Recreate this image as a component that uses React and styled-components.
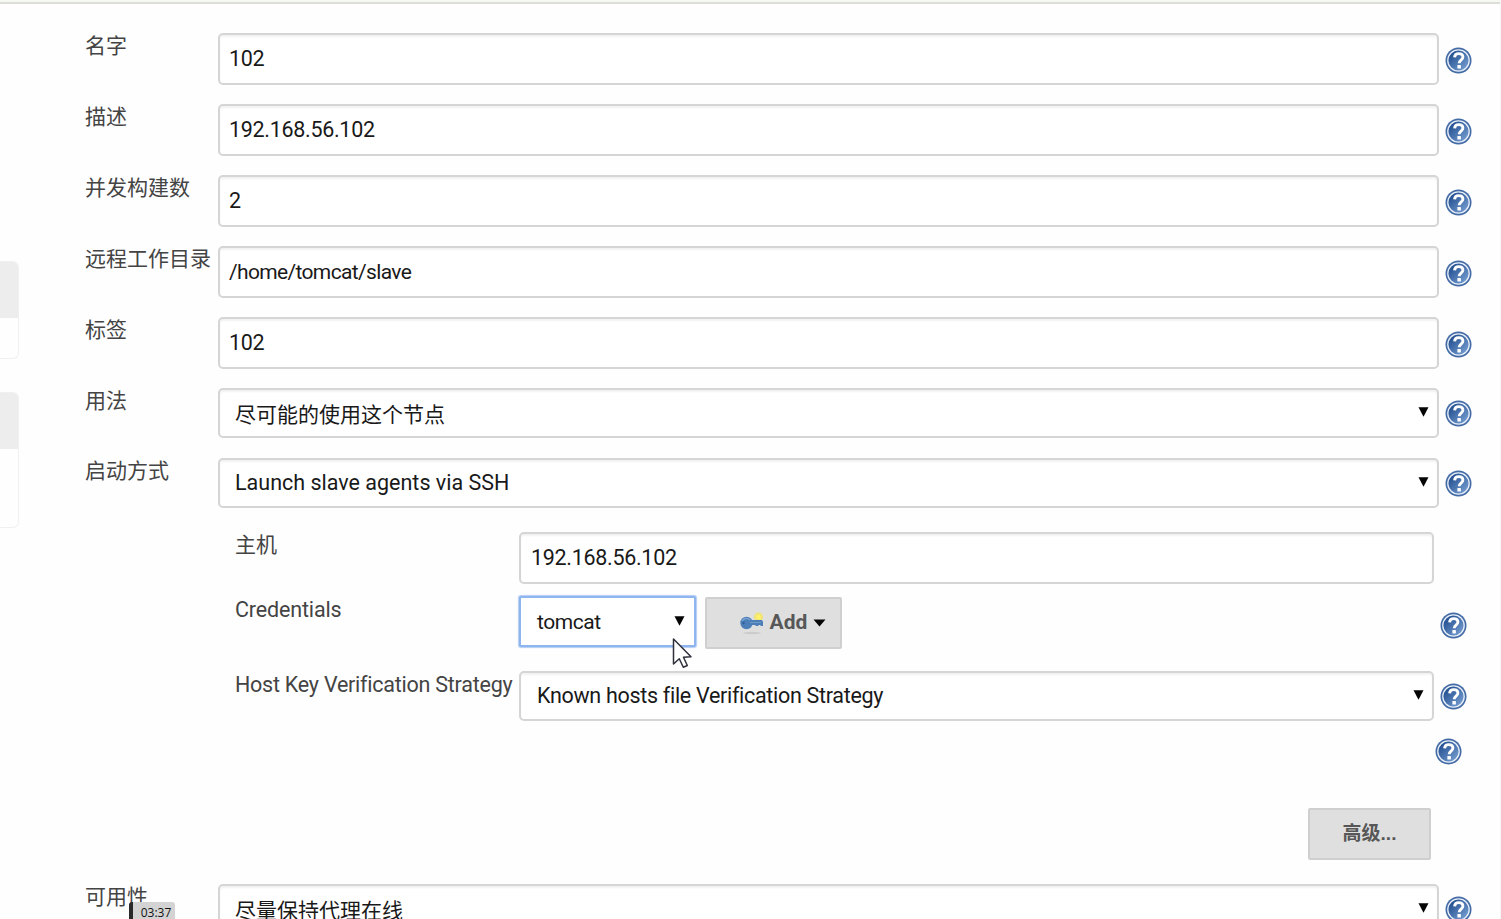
import React from "react";
import styled, { createGlobalStyle, css } from "styled-components";

const Global = createGlobalStyle`
  * { box-sizing: border-box; }
  body {
    margin: 0;
    background: #fefefe;
    font: 21px/26px "Liberation Sans", "Noto Sans CJK SC", sans-serif;
    color: #444;
    overflow: hidden;
  }
`;

const latinText = css`
  font-family: Roboto, "Liberation Sans", sans-serif;
  font-size: ${(p) => p.$size || 21.5}px;
  letter-spacing: ${(p) => p.$ls || 0}px;
`;

const Page = styled.div`
  position: relative;
  height: 919px;
  display: flex;
  flex-direction: column;
  overflow: hidden;
  border-right: 1px solid #f7f7f7;
`;
const TopBar = styled.header`
  height: 4px;
  flex: none;
  background: #f6f8f2;
  border-bottom: 2px solid #dcddd9;
`;
const Body = styled.div`
  display: flex;
  flex: 1;
  min-height: 0;
`;
const Sidebar = styled.aside`
  width: 85px;
  flex: none;
  padding-top: 257px;
  display: flex;
  flex-direction: column;
  gap: 33px;
`;
const Pane = styled.section`
  width: 19px;
  height: ${(p) => p.$h}px;
  border: 1px solid #f0f0f0;
  border-left: 0;
  border-radius: 0 6px 6px 0;
  overflow: hidden;
`;
const PaneHead = styled.div`
  height: 56px;
  background: #ededed;
`;
const Form = styled.main`
  flex: 1;
  padding-top: 29px;
`;
const Row = styled.div`
  display: flex;
  align-items: flex-start;
  height: ${(p) => p.$h || 71}px;
`;
const Label = styled.label`
  width: ${(p) => p.$w || 133}px;
  flex: none;
  white-space: nowrap;
  padding-top: ${(p) => p.$top || 0}px;
  ${(p) => p.$latin && latinText}
`;
const Field = styled.div`
  width: ${(p) => p.$w || 1221}px;
  height: ${(p) => p.$h || 52}px;
  flex: none;
  display: flex;
  align-items: center;
  justify-content: space-between;
  border: 2px solid ${(p) => (p.$focus ? "#8fb5ee" : "#d5d5d5")};
  border-radius: ${(p) => (p.$focus ? 2 : 5)}px;
  background: #fff;
  box-shadow: ${(p) => (p.$focus ? "0 0 1px 1px #b2cdf5" : "inset 0 2px 2px #f2f2f2")};
  padding: 0 ${(p) => (p.$select ? (p.$focus ? 9 : 8) : 10)}px 0 ${(p) => p.$pl || (p.$select ? 15 : 9)}px;
  color: #191919;
`;
const Value = styled.span`
  position: relative;
  top: ${(p) => p.$dy || 0}px;
  white-space: nowrap;
  ${(p) => p.$latin && latinText}
`;
const Caret = styled.svg`
  width: 11px;
  height: 10px;
  display: block;
  margin-bottom: 2px;
`;
const HelpIcon = styled.svg`
  width: 27px;
  height: 27px;
  flex: none;
  margin: ${(p) => p.$top}px 0 0 6px;
`;
const Nested = styled.section`
  padding-left: 150px;
  height: 352px;
`;
const Button = styled.button`
  display: flex;
  align-items: center;
  justify-content: center;
  width: ${(p) => p.$w}px;
  height: 52px;
  padding: 0;
  border: 2px solid #cfcfcf;
  border-radius: 2px;
  background: #dfdfdf;
  color: #575757;
  font: bold ${(p) => p.$size || 21}px/26px "Liberation Sans", "Noto Sans CJK SC", sans-serif;
`;
const AddButton = styled(Button)`
  margin: 1px 0 0 9px;
  padding: 0 0 2px 18px;
  font-family: Roboto, "Liberation Sans", sans-serif;
`;
const KeyIcon = styled.svg`
  width: 26px;
  height: 26px;
  margin-right: 5px;
`;
const MenuCaret = styled.svg`
  width: 13px;
  height: 8px;
  margin: 1px 0 0 6px;
`;
const CredentialHelp = styled.div`
  margin-left: 592px;
`;
const HelpLine = styled.div`
  display: flex;
  justify-content: flex-end;
  height: 70px;
  padding-right: 38px;
`;
const Actions = styled.div`
  display: flex;
  justify-content: flex-end;
  padding-right: 69px;
`;
const Pointer = styled.svg`
  position: absolute;
  left: 671px;
  top: 637px;
  width: 23px;
  height: 34px;
`;
const TimeBadge = styled.div`
  position: absolute;
  left: 129px;
  top: 902px;
  width: 46px;
  height: 17px;
  padding-left: 4px;
  border-left: 4px solid #292929;
  border-radius: 3px 3px 0 0;
  background: #d3d3d3;
  color: #111;
  font: 12px/22px "Open Sans", "Noto Sans", sans-serif;
  text-align: center;
`;

const Help = ({ top = 14 }) => (
  <HelpIcon $top={top} viewBox="0 0 27 27">
    <defs>
      <linearGradient id="help" x1="0" y1="0" x2="1" y2="1">
        <stop offset="0.15" stopColor="#234f90" />
        <stop offset="0.85" stopColor="#7199cd" />
      </linearGradient>
    </defs>
    <circle cx="13.5" cy="13.5" r="13" fill="#446ba5" />
    <circle cx="13.5" cy="13.5" r="10.7" fill="url(#help)" stroke="#e6eef8" strokeWidth="1.3" />
    <path d="M9.6 10.4C9.7 7.6 11.2 6.6 13.7 6.6c2.6 0 4.2 1.2 4.2 3.5 0 3-3.7 3.1-3.7 6.1" fill="none" stroke="#fff" strokeWidth="2.9" />
    <rect x="12.4" y="18" width="3.5" height="3.4" rx=".5" fill="#fff" />
  </HelpIcon>
);

const Arrow = () => (
  <Caret viewBox="0 0 11 10"><path d="M.5.3h10L5.5 9.8z" fill="#050505" /></Caret>
);

const SelectBox = ({ children, dy = 0, latin, ls, size, ...rest }) => (
  <Field $select $h={50} {...rest}>
    <Value $dy={dy} $latin={latin} $ls={ls} $size={size}>{children}</Value>
    <Arrow />
  </Field>
);

const inputs = [
  { label: "名字", value: "102" },
  { label: "描述", value: "192.168.56.102" },
  { label: "并发构建数", value: "2" },
  { label: "远程工作目录", value: "/home/tomcat/slave", ls: -0.65, size: 21 },
  { label: "标签", value: "102" },
];

export default function App() {
  return (
    <Page>
      <Global />
      <TopBar />
      <Body>
        <Sidebar>
          <Pane $h={98}><PaneHead /></Pane>
          <Pane $h={136}><PaneHead /></Pane>
        </Sidebar>
        <Form>
          {inputs.map((f) => (
            <Row key={f.label}>
              <Label>{f.label}</Label>
              <Field><Value $latin $ls={f.ls || -0.3} $size={f.size}>{f.value}</Value></Field>
              <Help />
            </Row>
          ))}
          <Row $h={70}>
            <Label>用法</Label>
            <SelectBox dy={2}>尽可能的使用这个节点</SelectBox>
            <Help top={12} />
          </Row>
          <Row $h={74}>
            <Label>启动方式</Label>
            <SelectBox latin>Launch slave agents via SSH</SelectBox>
            <Help top={12} />
          </Row>
          <Nested>
            <Row $h={64}>
              <Label $w={284}>主机</Label>
              <Field $w={915} $pl={10}><Value $latin $ls={-0.3}>192.168.56.102</Value></Field>
            </Row>
            <Row $h={75}>
              <Label $w={284} $latin $ls={-0.15} $top={1}>Credentials</Label>
              <SelectBox $w={177} $h={51} $pl={16} $focus latin ls={-0.45} size={21}>tomcat</SelectBox>
              <AddButton $w={137}>
                <KeyIcon viewBox="0 0 26 26">
                  <ellipse cx="13" cy="24" rx="9" ry="1.2" fill="#cbcbcb" />
                  <circle cx="19.5" cy="8" r="4.5" fill="#f1e477" />
                  <circle cx="19.5" cy="8" r="2.3" fill="#fff36b" />
                  <path d="M11 11h12l1 2v4h-2.5v-1h-2v1h-3v-1h-6z" fill="#4c7eb7" />
                  <circle cx="7.5" cy="14" r="6.2" fill="#4c7eb7" />
                  <path d="M3 12a5 5 0 0 1 8-1" fill="none" stroke="#79a3d2" strokeWidth="1.5" />
                  <path d="M11 13.5h11" stroke="#7099c8" strokeWidth="1" />
                  <circle cx="4.5" cy="14" r="1.2" fill="#315f99" />
                </KeyIcon>
                Add
                <MenuCaret viewBox="0 0 13 8"><path d="M.5.5h12L6.5 7.5z" fill="#050505" /></MenuCaret>
              </AddButton>
              <CredentialHelp><Help top={16} /></CredentialHelp>
            </Row>
            <Row $h={67}>
              <Label $w={284} $latin $ls={-0.24} $top={1}>Host Key Verification Strategy</Label>
              <SelectBox $w={915} $pl={16} latin ls={-0.3}>Known hosts file Verification Strategy</SelectBox>
              <Help top={12} />
            </Row>
            <HelpLine><Help top={0} /></HelpLine>
            <Actions><Button $w={123} $size={19}>高级...</Button></Actions>
          </Nested>
          <Row>
            <Label>可用性</Label>
            <SelectBox dy={2}>尽量保持代理在线</SelectBox>
            <Help top={12} />
          </Row>
        </Form>
      </Body>
      <Pointer viewBox="0 0 23 34">
        <path d="M2.5 2v25l5.8-5.2 4 8.5 4-1.8-3.8-8.2 7.5-.5z" fill="#fff" stroke="#30303c" strokeWidth="1.5" strokeLinejoin="round" />
      </Pointer>
      <TimeBadge>03:37</TimeBadge>
    </Page>
  );
}
